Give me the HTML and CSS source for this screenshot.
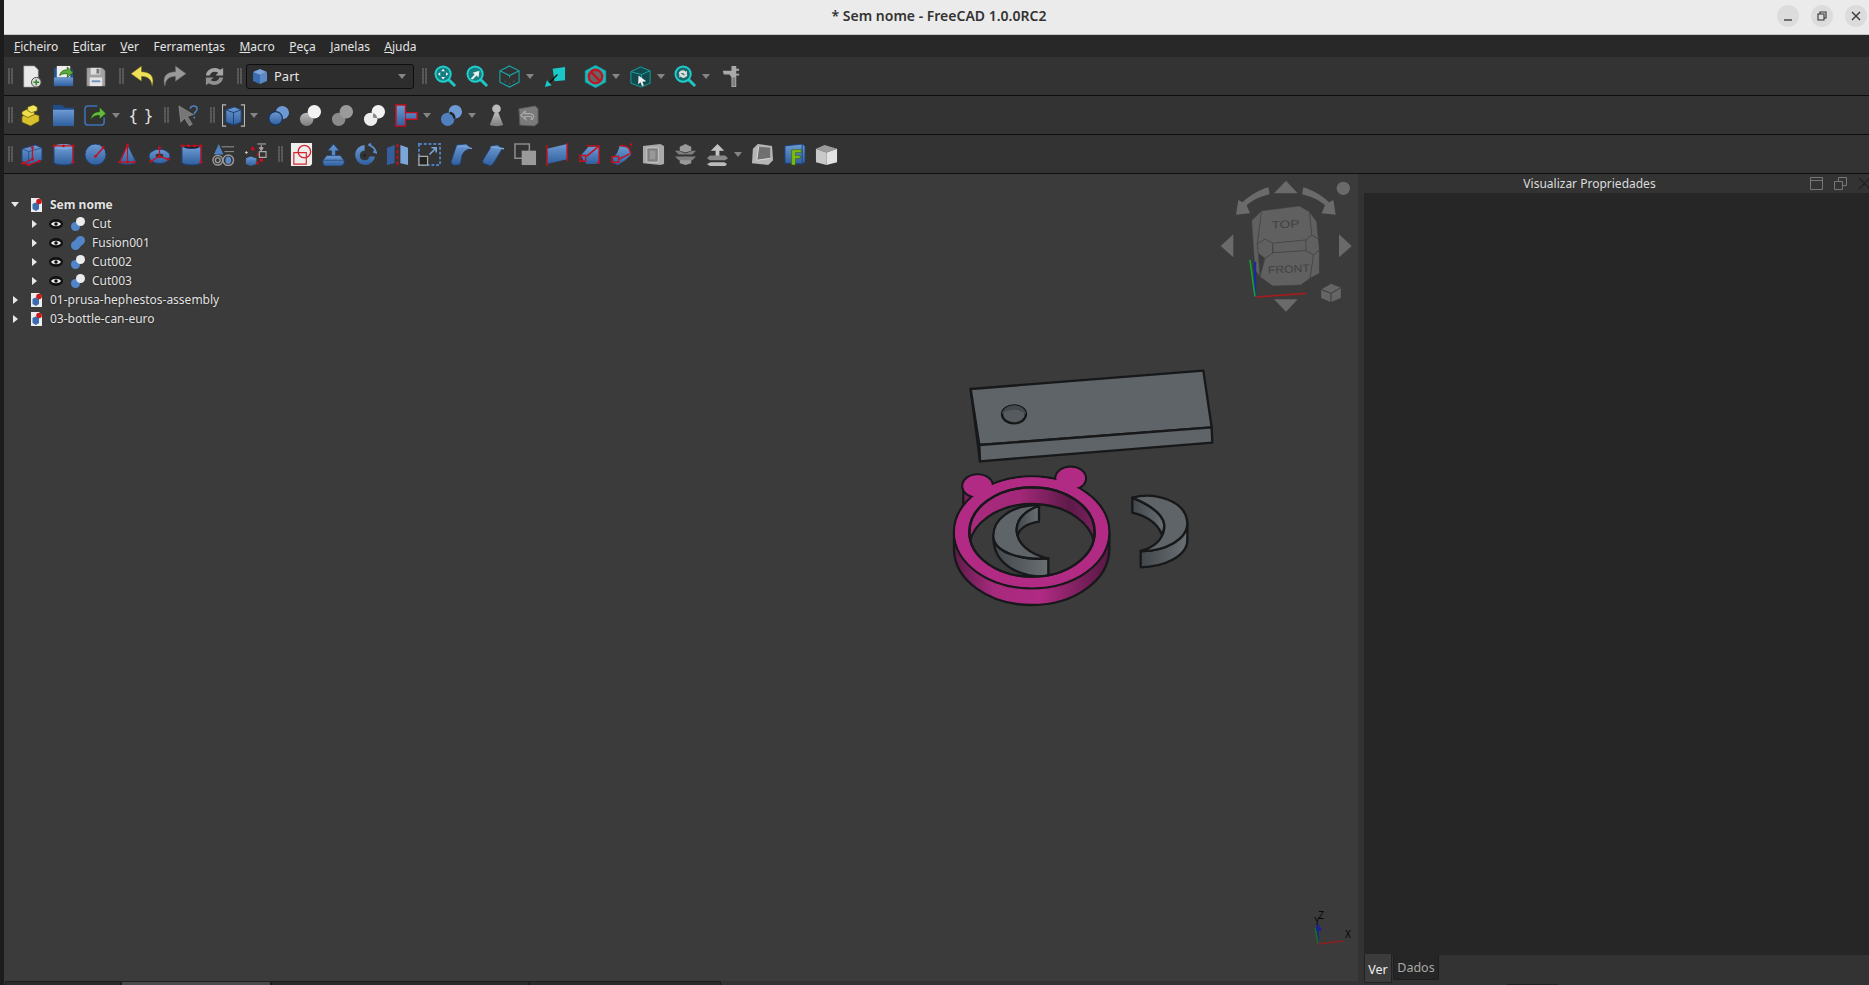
FILE: index.html
```html
<!DOCTYPE html>
<html lang="pt">
<head>
  <meta charset="UTF-8">
  <title>* Sem nome - FreeCAD 1.0.0RC2</title>
  <link rel="stylesheet" href="styles.css">
</head>
<body>
  <svg class="defs" width="0" height="0">
    <defs>
      <linearGradient id="mag" x1="0" x2="1" y1="0" y2="0">
        <stop offset="0" stop-color="#5e1a49"/><stop offset=".25" stop-color="#a52a7c"/><stop offset=".55" stop-color="#b12a84"/><stop offset="1" stop-color="#571843"/>
      </linearGradient>
      <linearGradient id="magin" x1="0" x2="1" y1="0" y2="0">
        <stop offset="0" stop-color="#a82a7e"/><stop offset=".4" stop-color="#a32878"/><stop offset=".8" stop-color="#5e1a49"/><stop offset="1" stop-color="#7a205d"/>
      </linearGradient>
      <linearGradient id="steel" x1="0" x2="1" y1="0" y2="0">
        <stop offset="0" stop-color="#42474b"/><stop offset="1" stop-color="#6a6f73"/>
      </linearGradient>
      <linearGradient id="blue" x1="0" x2="0" y1="0" y2="1">
        <stop offset="0" stop-color="#6d9ad2"/><stop offset="1" stop-color="#2f5f9f"/>
      </linearGradient>
      <linearGradient id="gray" x1="0" x2="0" y1="0" y2="1">
        <stop offset="0" stop-color="#bbb"/><stop offset="1" stop-color="#7d7d7d"/>
      </linearGradient>

      <!-- row 1 -->
      <symbol id="i-new" viewBox="0 0 24 24"><path d="M4 1h11l4 4v18H4z" fill="#e9e9e9" stroke="#999" stroke-width=".6"/><circle cx="17" cy="18" r="5" fill="#ddd" stroke="#444"/><path d="M17 15v6M14 18h6" stroke="#2c8a2c" stroke-width="1.6"/></symbol>
      <symbol id="i-open" viewBox="0 0 24 24"><path d="M2 3h7l2 2h11v17H2z" fill="#25548f"/><path d="M5 1h14v12H5z" fill="#eee"/><path d="M2 13h20v9H2z" fill="url(#blue)"/><path d="M8 11c1-5 5-6 8-6V2l6 6-6 5v-4c-3 0-6 0-8 2z" fill="#5cae3a" stroke="#1c4f14" stroke-width=".7"/></symbol>
      <symbol id="i-save" viewBox="0 0 24 24"><path d="M3 3h16l3 3v16H3z" fill="#a2a2a2" stroke="#777" stroke-width=".6"/><path d="M7 3h10v7H7z" fill="#ddd"/><path d="M13 4h3v5h-3z" fill="#777"/><path d="M6 13h13v9H6z" fill="#e4e4e4"/><path d="M8 16h9v2H8z" fill="#6f93bd"/></symbol>
      <symbol id="i-undo" viewBox="0 0 24 24"><path d="M11 1L0 9l11 8v-5c6 0 10 2 11 10 3-9-1-15-11-15z" fill="#efe05a" stroke="#6c6118" stroke-width=".6"/></symbol>
      <symbol id="i-redo" viewBox="0 0 24 24"><path d="M13 1l11 8-11 8v-5C7 12 3 14 2 22-1 13 3 7 13 7z" fill="#999" stroke="#666" stroke-width=".6"/></symbol>
      <symbol id="i-refresh" viewBox="0 0 24 24"><path d="M3 11C4 4 12 1 18 5l3-2v8h-8l3-3c-4-2-8-1-9 3z" fill="#a5a5a5"/><path d="M21 13c-1 7-9 10-15 6l-3 2v-8h8l-3 3c4 2 8 1 9-3z" fill="#909090"/></symbol>
      <symbol id="i-fitall" viewBox="0 0 24 24"><path d="M15 15l7 7" stroke="#1fc6c4" stroke-width="3"/><circle cx="9.500" cy="9.500" r="8" fill="#157f80" stroke="#1fcfcd" stroke-width="2"/><path d="M9.500 4l2 2.500h-4zM9.500 15l2-2.500h-4zM4 9.500l2.500-2v4zM15 9.500l-2.500-2v4z" fill="#eef"/></symbol>
      <symbol id="i-fitsel" viewBox="0 0 24 24"><path d="M15 15l7 7" stroke="#1fc6c4" stroke-width="3"/><circle cx="9.500" cy="9.500" r="8" fill="#157f80" stroke="#1fcfcd" stroke-width="2"/><path d="M5 14l4-4-2-2 7-2-1 7-2-2-4 4z" fill="#eee"/></symbol>
      <symbol id="i-iso" viewBox="0 0 24 24"><path d="M12 1l10 5v12l-10 5-10-5V6zM2 6l10 5 10-5M12 11v2" fill="none" stroke="#17a8a8" stroke-width="1.100"/><path d="M7 17l1 .5M16 17.500l1-.5M12 19v1" stroke="#17a8a8"/></symbol>
      <symbol id="i-meas" viewBox="0 0 24 24"><path d="M9 4l13-2v14l-11 1z" fill="#1bc8c8"/><path d="M14 10L5 19" stroke="#111" stroke-width="1.400"/><path d="M1 23l2-7 5 5z" fill="#1bc8c8"/></symbol>
      <symbol id="i-nodraw" viewBox="0 0 24 24"><path d="M12 0l11 6v12l-11 6-11-6V6z" fill="#1bb9bb" stroke="#0c6d6d" stroke-width=".7"/><circle cx="12" cy="12" r="7" fill="#666" stroke="#c01522" stroke-width="2.500"/><path d="M7 7l10 10" stroke="#c01522" stroke-width="2.500"/></symbol>
      <symbol id="i-selbox" viewBox="0 0 24 24"><path d="M12 2l10 4v13l-9 4-11-4V7z" fill="#124a4d" stroke="#18a3a5"/><path d="M2 7l11 3 9-4M13 10v4" fill="none" stroke="#18a3a5"/><path d="M10 11l8 6-4 .5 1.500 4-2 .5-1.500-4-2.500 2z" fill="#eee"/></symbol>
      <symbol id="i-zoomsel" viewBox="0 0 24 24"><path d="M15 15l7 7" stroke="#1fc6c4" stroke-width="3"/><circle cx="9.500" cy="9.500" r="8" fill="#16686a" stroke="#1fcfcd" stroke-width="2"/><path d="M5 9c0-3 5-5 7-2l1.500-1v4h-4l1-1c-1-1-3-1-4 1zM14 10c0 3-5 5-7 2l-1.500 1V9h4l-1 1c1 1 3 1 4-1z" fill="#ddd"/></symbol>
      <symbol id="i-caliper" viewBox="0 0 24 24"><path d="M4 6h9V1h5v3h3v2h-3v3h3v2h-3v12h-5V13l-2-3H5z" fill="#a9a9a9"/><path d="M14 13h3v9h-3z" fill="#7c7c7c"/></symbol>

      <!-- row 2 -->
      <symbol id="i-blocks" viewBox="0 0 24 24"><path d="M2 13l8-4 10 3v6l-9 5-9-4z" fill="#d9c12e" stroke="#544a0e" stroke-width=".7"/><path d="M2 8l8-4 5 2v5l-7 3-6-3z" fill="#f0df4b" stroke="#544a0e" stroke-width=".7"/><path d="M8 3l6-2 4 2v4l-6 2-4-2z" fill="#f2e75e" stroke="#544a0e" stroke-width=".7"/></symbol>
      <symbol id="i-folder" viewBox="0 0 24 24"><path d="M1 1h9l4 3h9v19H1z" fill="#1f4d8a"/><path d="M1 6h22v17H1z" fill="url(#blue)"/></symbol>
      <symbol id="i-share" viewBox="0 0 24 24"><path d="M14 2H4a3 3 0 0 0-3 3v14a3 3 0 0 0 3 3h14a3 3 0 0 0 3-3v-5" fill="none" stroke="#3f72b5" stroke-width="1.600"/><path d="M7 17c0-6 4-9 9-9V3l7 7-7 6v-4c-4 0-7 1-9 5z" fill="#62b93d" stroke="#173f10" stroke-width=".7"/></symbol>
      <symbol id="i-whats" viewBox="0 0 24 24"><path d="M3 2l15 9-6 2 5 8-3 2-5-8-4 4z" fill="#777" stroke="#999" stroke-width=".6"/><path d="M15 5c0-4 7-4 7 0 0 3-3 3-3 6M19 13v2" fill="none" stroke="#4f80bd" stroke-width="1.600"/></symbol>
      <symbol id="i-group" viewBox="0 0 24 24"><path d="M4 1H0v22h4M20 1h4v22h-4" transform="translate(.5 0) scale(.96 1)" fill="none" stroke="#bbb" stroke-width="1.300"/><path d="M4 6l9-3 7 3v13l-8 3-8-3z" fill="url(#blue)" stroke="#1d3f73"/><path d="M4 6l8 3 8-3M12 9v13" fill="none" stroke="#1d3f73"/></symbol>
      <symbol id="i-fuse" viewBox="0 0 24 24"><circle cx="16" cy="9" r="7" fill="#6d9ad2"/><circle cx="9" cy="15" r="7" fill="url(#blue)" stroke="#16345f" stroke-width="1.200"/></symbol>
      <symbol id="i-cut" viewBox="0 0 24 24"><circle cx="8" cy="16" r="7" fill="url(#gray)"/><circle cx="16" cy="8" r="7" fill="#f2f2f2"/></symbol>
      <symbol id="i-common" viewBox="0 0 24 24"><circle cx="8" cy="16" r="7" fill="#8b8b8b"/><circle cx="16" cy="8" r="7" fill="#9a9a9a"/></symbol>
      <symbol id="i-inter" viewBox="0 0 24 24"><circle cx="8" cy="16" r="7" fill="#eee"/><circle cx="16" cy="8" r="7" fill="#f2f2f2"/><path d="M11 9.500a7 7 0 0 1 4 5 7 7 0 0 1-4.500-.5 7 7 0 0 1 .5-4.500z" fill="#888"/></symbol>
      <symbol id="i-join" viewBox="0 0 24 24"><path d="M1 1h10v8h12v7H11v7H1z" fill="url(#blue)" stroke="#c4101c" stroke-width="1.500"/><path d="M11 9v7" stroke="#c4101c" stroke-width="1"/></symbol>
      <symbol id="i-split" viewBox="0 0 24 24"><circle cx="16" cy="8" r="7" fill="#6d9ad2"/><circle cx="8" cy="16" r="7" fill="#4f80bd"/><path d="M10 9c4 1 5 4 5 6" fill="none" stroke="#222" stroke-width="2.500"/></symbol>
      <symbol id="i-pawn" viewBox="0 0 24 24"><circle cx="12" cy="5" r="4.500" fill="#bbb"/><path d="M10 9h4l5 13c-4 1.500-10 1.500-14 0z" fill="url(#gray)"/></symbol>
      <symbol id="i-graycube" viewBox="0 0 24 24"><path d="M2 5l17-3 3 3v15l-4 3-15-1z" fill="#7b7b7b" stroke="#5a5a5a"/><path d="M16 16c3-3 1-6-3-6H8l1-3-5 5 5 4-1-3h5c3 0 3 2 2 3z" fill="none" stroke="#aaa" stroke-width="1.200"/></symbol>

      <!-- row 3 -->
      <symbol id="i-box" viewBox="0 0 24 24"><path d="M2 6l14-4 7 3v13l-14 5-7-4z" fill="url(#blue)" stroke="#1d3f73"/><path d="M2 6l7 3 14-4M9 9v13" fill="none" stroke="#1d3f73" stroke-width=".7"/><path d="M13 5v12L3 21l6 2 11-4" fill="none" stroke="#c4101c" stroke-width="1.300"/><g fill="#c4101c"><circle cx="13" cy="5" r="1.500"/><circle cx="13" cy="17" r="1.500"/><circle cx="3" cy="21" r="1.500"/><circle cx="9" cy="23" r="1.500"/><circle cx="20" cy="19" r="1.500"/></g></symbol>
      <symbol id="i-cyl" viewBox="0 0 24 24"><path d="M2 4v16c0 4 20 4 20 0V4z" fill="url(#blue)" stroke="#1d3f73"/><ellipse cx="12" cy="4" rx="10" ry="3" fill="#7aa4da"/><path d="M2 3h20v17" fill="none" stroke="#c4101c" stroke-width="1.300"/><g fill="#c4101c"><circle cx="2" cy="3" r="1.500"/><circle cx="12" cy="3" r="1.500"/><circle cx="22" cy="3" r="1.500"/><circle cx="22" cy="20" r="1.500"/></g></symbol>
      <symbol id="i-sphere" viewBox="0 0 24 24"><circle cx="12" cy="12" r="11" fill="url(#blue)" stroke="#1d3f73"/><path d="M12 14L20 5" stroke="#c4101c" stroke-width="1.500"/><circle cx="12" cy="14" r="1.500" fill="#c4101c"/><circle cx="20" cy="5" r="1.500" fill="#c4101c"/></symbol>
      <symbol id="i-cone" viewBox="0 0 24 24"><path d="M12 2L3 20c3 3 15 3 18 0z" fill="url(#blue)" stroke="#1d3f73" stroke-width=".7"/><path d="M12 2v18H4z M12 20h7" fill="none" stroke="#c4101c" stroke-width="1.200"/><g fill="#c4101c"><circle cx="12" cy="2" r="1.500"/><circle cx="12" cy="20" r="1.500"/><circle cx="4" cy="20" r="1.500"/><circle cx="19" cy="20" r="1.500"/></g></symbol>
      <symbol id="i-torus" viewBox="0 0 24 24"><ellipse cx="12" cy="14" rx="11" ry="7.500" fill="url(#blue)" stroke="#1d3f73"/><ellipse cx="12" cy="13" rx="4" ry="2" fill="#333"/><path d="M12 5v9L3 19M12 14l9 3" fill="none" stroke="#c4101c" stroke-width="1.300"/><g fill="#c4101c"><circle cx="12" cy="5" r="1.500"/><circle cx="12" cy="14" r="1.500"/><circle cx="3" cy="19" r="1.500"/><circle cx="21" cy="17" r="1.500"/></g></symbol>
      <symbol id="i-tube" viewBox="0 0 24 24"><path d="M2 4v16c0 4 20 4 20 0V4z" fill="url(#blue)" stroke="#1d3f73"/><ellipse cx="12" cy="4" rx="8" ry="2" fill="#123"/><path d="M2 3h20v17" fill="none" stroke="#c4101c" stroke-width="1.300"/><g fill="#c4101c"><circle cx="2" cy="3" r="1.500"/><circle cx="9" cy="3" r="1.500"/><circle cx="15" cy="3" r="1.500"/><circle cx="22" cy="3" r="1.500"/><circle cx="22" cy="20" r="1.500"/></g></symbol>
      <symbol id="i-prims" viewBox="0 0 24 24"><path d="M7 1L2 12h10z" fill="#4f80bd"/><path d="M10 4h13M13 9h10" stroke="#999"/><g fill="none" stroke="#999" stroke-width="1.500"><circle cx="6" cy="18" r="5"/><circle cx="6" cy="18" r="2.500"/><circle cx="17" cy="18" r="5.500"/></g><ellipse cx="17" cy="18" rx="3" ry="4" fill="#5b8bc7"/></symbol>
      <symbol id="i-builder" viewBox="0 0 24 24"><path d="M2 16l5-2 6 2v6l-6 2-5-2z" fill="url(#blue)"/><g fill="#c4101c"><circle cx="9" cy="6" r="2"/><circle cx="15" cy="12" r="1.500"/><circle cx="18" cy="18" r="2"/><circle cx="14" cy="21" r="1.500"/></g><path d="M14 1h9M18 2v5M16 5l2 3 2-3z" stroke="#bbb" fill="#c4101c"/><path d="M16 9h7v6h-7z" fill="none" stroke="#aaa" stroke-width="1.200"/><path d="M1 10h3M2.500 8.500v3" stroke="#ccc"/></symbol>
      <symbol id="i-offset2d" viewBox="0 0 24 24"><path d="M1 0h22v22l-2 2H1z" fill="#eee"/><path d="M4 10h13v12H4z" fill="none" stroke="#d8242c" stroke-width="1.200"/><circle cx="15" cy="9" r="6.500" fill="none" stroke="#d8242c" stroke-width="1.400"/></symbol>
      <symbol id="i-extrude" viewBox="0 0 24 24"><path d="M12 1l6 7h-4v6h-4V8H6z" fill="#5b8bc7" stroke="#1d3f73" stroke-width=".7"/><path d="M1 18l4-5h14l4 5v4l-3 2H3l-2-2z" fill="url(#blue)" stroke="#1d3f73" stroke-width=".7"/><path d="M1 18h22" stroke="#1d3f73" stroke-width=".7"/></symbol>
      <symbol id="i-revolve" viewBox="0 0 24 24"><path d="M11 2A10.500 10.500 0 1 0 22 14h-6a5 5 0 1 1-5-6z" fill="url(#blue)"/><path d="M15 2c4 1 7 4 8 8l-3-1M15 2l3-1" fill="none" stroke="#5b8bc7" stroke-width="2"/><circle cx="11" cy="13" r="1.500" fill="#222"/></symbol>
      <symbol id="i-mirror" viewBox="0 0 24 24"><path d="M1 5l8-3v19l-8 2z" fill="#345f9c"/><path d="M23 5l-8-3v19l8 2z" fill="#7ca5d8"/><path d="M12 1v22" stroke="#c4101c" stroke-width="2" stroke-dasharray="4 2"/></symbol>
      <symbol id="i-scale" viewBox="0 0 24 24"><path d="M1 1h22v22H1z" fill="none" stroke="#4f80bd" stroke-width="2" stroke-dasharray="3 2"/><path d="M1 14h9v9H1z" fill="#222" stroke="#aaa" stroke-width="1.300"/><path d="M12 12l6-6M14 5h5v5" fill="none" stroke="#7ca5d8" stroke-width="1.600"/></symbol>
      <symbol id="i-fillet" viewBox="0 0 24 24"><path d="M7 2L1 20l2 3h6l2-2 1-6C13 9 18 6 22 6L17 1z" fill="url(#blue)" stroke="#1d3f73" stroke-width=".7"/><path d="M8 4c6-1 11 0 15 2" fill="none" stroke="#7ca5d8" stroke-width="1.400"/></symbol>
      <symbol id="i-chamfer" viewBox="0 0 24 24"><path d="M10 3L1 18v3l8 3 3-3 9-15-5-4z" fill="url(#blue)" stroke="#1d3f73" stroke-width=".7"/><path d="M9 4l14 2" stroke="#7ca5d8" stroke-width="1.400"/></symbol>
      <symbol id="i-offset" viewBox="0 0 24 24"><path d="M1 1h15v15H1z" fill="none" stroke="#8c8c8c" stroke-width="1.600"/><path d="M8 8h15v15H8z" fill="#9a9a9a"/></symbol>
      <symbol id="i-ruled" viewBox="0 0 24 24"><path d="M1 6l21-5v16L1 22z" fill="url(#blue)"/><path d="M1 2v22M22 0v19" stroke="#c4101c" stroke-width="1.500"/></symbol>
      <symbol id="i-loft" viewBox="0 0 24 24"><path d="M3 13l8-9h11v18H9l-3-3z" fill="url(#blue)"/><path d="M9 3h13v18H19" fill="none" stroke="#c4101c" stroke-width="1.500"/><path d="M22 3L9 14M2 13h6v6H2z" fill="none" stroke="#c4101c" stroke-width="1.500"/></symbol>
      <symbol id="i-sweep" viewBox="0 0 24 24"><path d="M3 15c4-2 6-8 7-12l9 2 3 7-6 6-8 5-4-2z" fill="url(#blue)"/><path d="M10 3c3-1 8 0 10 3M2 14h7v6H2zM9 17l12-6M20 6l2 5" fill="none" stroke="#c4101c" stroke-width="1.500"/><circle cx="22" cy="1.500" r="1.300" fill="#c4101c"/></symbol>
      <symbol id="i-thick" viewBox="0 0 24 24"><path d="M1 3l18-2 4 2v19l-4 1-18-2z" fill="#aaa"/><path d="M5 5h12v15H5z" fill="#808080" stroke="#ccc"/><path d="M8 8h6v9H8z" fill="#999"/></symbol>
      <symbol id="i-section" viewBox="0 0 24 24"><path d="M6 4l6-3 6 3v4l-6 2-6-2zM6 16l6-2 6 2v5l-6 2-6-2z" fill="#9a9a9a"/><path d="M1 8l4 0 7 3 7-3 4 0-4 4H5zM1 14h22l-4 4H5z" fill="#7f7f7f"/></symbol>
      <symbol id="i-xsect" viewBox="0 0 24 24"><path d="M12 1l7 7h-5v6h-4V8H5z" fill="#c4c4c4"/><path d="M4 13h16l3 3-3 2H4l-3-2z" fill="#888"/><path d="M5 20h14l3 2-2 2H4l-3-2z" fill="#bbb"/></symbol>
      <symbol id="i-shell" viewBox="0 0 24 24"><path d="M7 1l15 2 1 15-5 5-17-2 1-15z" fill="#b5b5b5"/><path d="M8 4l12 1v11l-14 2z" fill="#707070"/><path d="M8 4l-2 14 14-2" fill="none" stroke="#ddd"/></symbol>
      <symbol id="i-compound" viewBox="0 0 24 24"><path d="M2 3l18-2 3 2v17l-3 2-18-1z" fill="url(#blue)" stroke="#1d3f73"/><path d="M20 1v21" stroke="#1d3f73"/><path d="M9 7h10v3h-6v3h5v3h-5v7H9z" fill="#7cbb13" stroke="#3a5a08" stroke-width=".6"/></symbol>
      <symbol id="i-solid" viewBox="0 0 24 24"><path d="M1 6l11 4v13L1 20z" fill="#c9c9c9"/><path d="M23 6l-11 4v13l11-3z" fill="#e3e3e3"/><path d="M1 6l9-4 13 4-11 4z" fill="#9c9c9c"/></symbol>

      <!-- tree -->
      <symbol id="t-doc" viewBox="0 0 16 16"><path d="M3 1h8l3 3v11H3z" fill="#eee"/><path d="M4.500 7l3-1.500L11 7v5l-3 2-3.500-2z" fill="#3a6db0"/><circle cx="11" cy="4.500" r="2.800" fill="#c91a1a"/></symbol>
      <symbol id="t-eye" viewBox="0 0 14 10"><ellipse cx="7" cy="5" rx="7" ry="5" fill="#111"/><path d="M2 5c2-3 8-3 10 0-2 3-8 3-10 0z" fill="#eee"/><circle cx="7" cy="5" r="1.800" fill="#111"/></symbol>
      <symbol id="t-cut" viewBox="0 0 16 16"><circle cx="5.500" cy="10.500" r="4.500" fill="#5185c8"/><circle cx="10.500" cy="5.500" r="4.500" fill="#ececec"/></symbol>
      <symbol id="t-fuse" viewBox="0 0 16 16"><circle cx="5.500" cy="10.500" r="4.500" fill="#5185c8"/><circle cx="10.500" cy="5.500" r="4.500" fill="#5185c8"/><path d="M2.500 7.500l5-5 6 6-5 5z" fill="#5185c8"/></symbol>
    </defs>
  </svg>

  <header class="titlebar">
    <div class="title">* Sem nome - FreeCAD 1.0.0RC2</div>
    <div class="winbtns">
      <span class="winbtn"><svg width="12" height="12" viewBox="0 0 12 12"><path d="M2 10h8" stroke="#333" stroke-width="1.300"/></svg></span>
      <span class="winbtn"><svg width="12" height="12" viewBox="0 0 12 12"><path d="M2 4h6v6H2zM4 4V2h6v6H8" fill="none" stroke="#333" stroke-width="1.100"/></svg></span>
      <span class="winbtn"><svg width="12" height="12" viewBox="0 0 12 12"><path d="M2 2l8 8M10 2l-8 8" stroke="#333" stroke-width="1.300"/></svg></span>
    </div>
  </header>

  <nav class="menubar">
    <span><u>F</u>icheiro</span>
    <span><u>E</u>ditar</span>
    <span><u>V</u>er</span>
    <span>Ferramen<u>t</u>as</span>
    <span><u>M</u>acro</span>
    <span><u>P</u>eça</span>
    <span><u>J</u>anelas</span>
    <span><u>A</u>juda</span>
  </nav>

  <div class="toolbar">
    <span class="grip first"></span>
    <span class="tool"><svg class="ic"><use href="#i-new"/></svg></span>
    <span class="tool"><svg class="ic"><use href="#i-open"/></svg></span>
    <span class="tool"><svg class="ic"><use href="#i-save"/></svg></span>
    <span class="grip wide"></span>
    <span class="tool"><svg class="ic"><use href="#i-undo"/></svg></span>
    <span class="tool"><svg class="ic"><use href="#i-redo"/></svg></span>
    <span class="tool gap"><svg class="ic"><use href="#i-refresh"/></svg></span>
    <span class="grip"></span>
    <div class="combo">
      <svg class="combo-ic"><path d="M1 4l7 3v9l-7-3z" fill="#3a6db0"/><path d="M15 4L8 7v9l7-3z" fill="#5b8bc7"/><path d="M1 4l7-3 7 3-7 3z" fill="#7aa4da"/></svg>
      <span class="combo-txt">Part</span>
      <span class="drop combo-drop"></span>
    </div>
    <span class="grip wide"></span>
    <span class="tool"><svg class="ic"><use href="#i-fitall"/></svg></span>
    <span class="tool"><svg class="ic"><use href="#i-fitsel"/></svg></span>
    <span class="tool"><svg class="ic"><use href="#i-iso"/></svg></span><span class="drop"></span>
    <span class="tool gap-s"><svg class="ic"><use href="#i-meas"/></svg></span>
    <span class="tool gap"><svg class="ic"><use href="#i-nodraw"/></svg></span><span class="drop"></span>
    <span class="tool"><svg class="ic"><use href="#i-selbox"/></svg></span><span class="drop"></span>
    <span class="tool"><svg class="ic"><use href="#i-zoomsel"/></svg></span><span class="drop"></span>
    <span class="tool"><svg class="ic"><use href="#i-caliper"/></svg></span>
  </div>

  <div class="toolbar">
    <span class="grip first"></span>
    <span class="tool"><svg class="ic"><use href="#i-blocks"/></svg></span>
    <span class="tool"><svg class="ic"><use href="#i-folder"/></svg></span>
    <span class="tool"><svg class="ic"><use href="#i-share"/></svg></span><span class="drop"></span>
    <span class="tool braces">{ }</span>
    <span class="grip wide"></span>
    <span class="tool"><svg class="ic"><use href="#i-whats"/></svg></span>
    <span class="grip"></span>
    <span class="tool"><svg class="ic"><use href="#i-group"/></svg></span><span class="drop"></span>
    <span class="tool"><svg class="ic"><use href="#i-fuse"/></svg></span>
    <span class="tool"><svg class="ic"><use href="#i-cut"/></svg></span>
    <span class="tool"><svg class="ic"><use href="#i-common"/></svg></span>
    <span class="tool"><svg class="ic"><use href="#i-inter"/></svg></span>
    <span class="tool"><svg class="ic"><use href="#i-join"/></svg></span><span class="drop"></span>
    <span class="tool"><svg class="ic"><use href="#i-split"/></svg></span><span class="drop"></span>
    <span class="tool"><svg class="ic"><use href="#i-pawn"/></svg></span>
    <span class="tool"><svg class="ic"><use href="#i-graycube"/></svg></span>
  </div>

  <div class="toolbar">
    <span class="grip first"></span>
    <span class="tool"><svg class="ic"><use href="#i-box"/></svg></span>
    <span class="tool"><svg class="ic"><use href="#i-cyl"/></svg></span>
    <span class="tool"><svg class="ic"><use href="#i-sphere"/></svg></span>
    <span class="tool"><svg class="ic"><use href="#i-cone"/></svg></span>
    <span class="tool"><svg class="ic"><use href="#i-torus"/></svg></span>
    <span class="tool"><svg class="ic"><use href="#i-tube"/></svg></span>
    <span class="tool"><svg class="ic"><use href="#i-prims"/></svg></span>
    <span class="tool"><svg class="ic"><use href="#i-builder"/></svg></span>
    <span class="grip"></span>
    <span class="tool"><svg class="ic"><use href="#i-offset2d"/></svg></span>
    <span class="tool"><svg class="ic"><use href="#i-extrude"/></svg></span>
    <span class="tool"><svg class="ic"><use href="#i-revolve"/></svg></span>
    <span class="tool"><svg class="ic"><use href="#i-mirror"/></svg></span>
    <span class="tool"><svg class="ic"><use href="#i-scale"/></svg></span>
    <span class="tool"><svg class="ic"><use href="#i-fillet"/></svg></span>
    <span class="tool"><svg class="ic"><use href="#i-chamfer"/></svg></span>
    <span class="tool"><svg class="ic"><use href="#i-offset"/></svg></span>
    <span class="tool"><svg class="ic"><use href="#i-ruled"/></svg></span>
    <span class="tool"><svg class="ic"><use href="#i-loft"/></svg></span>
    <span class="tool"><svg class="ic"><use href="#i-sweep"/></svg></span>
    <span class="tool"><svg class="ic"><use href="#i-thick"/></svg></span>
    <span class="tool"><svg class="ic"><use href="#i-section"/></svg></span>
    <span class="tool"><svg class="ic"><use href="#i-xsect"/></svg></span><span class="drop"></span>
    <span class="tool"><svg class="ic"><use href="#i-shell"/></svg></span>
    <span class="tool"><svg class="ic"><use href="#i-compound"/></svg></span>
    <span class="tool"><svg class="ic"><use href="#i-solid"/></svg></span>
  </div>

  <main class="workspace">
    <section class="center">
      <div class="viewport">
        <svg class="scene" viewBox="4 174 1354 807">
          <!-- parts, coordinates taken from a 3x crop at 930,350 -->
          <g transform="translate(930 350) scale(.33333)" stroke="#17181a" stroke-width="7" stroke-linejoin="round">
            <path d="M122 117L148 285L150 334L122 117z" fill="#2c2e30"/>
            <path d="M122 117L820 62L845 232L148 285z" fill="#5f6468"/>
            <path d="M148 285L845 232L847 278L150 334z" fill="#5f6468"/>
            <ellipse cx="252" cy="193" rx="36" ry="27" fill="#565b5f"/>
            <path d="M252 166a36 27 0 0 0-36 27c8-10 25-14 36-14s26 4 36 14a36 27 0 0 0-36-27z" fill="#44494d" stroke-width="0"/>

            <!-- ring -->
            <path d="M100 405V462L135 470V420z" fill="#7a205d"/>
            <path d="M72 547V597A233 168 0 0 0 538 597V547z" fill="url(#mag)"/>
            <ellipse cx="143" cy="408" rx="46" ry="35" fill="#b12a84"/>
            <ellipse cx="422" cy="385" rx="46" ry="35" fill="#b12a84"/>
            <ellipse cx="305" cy="547" rx="233" ry="168" fill="#b12a84"/>
            <ellipse cx="143" cy="408" rx="43" ry="32" fill="#b12a84" stroke="none"/>
            <ellipse cx="422" cy="385" rx="43" ry="32" fill="#b12a84" stroke="none"/>
            <ellipse cx="305" cy="547" rx="230" ry="165" fill="#b12a84" stroke="none"/>
            <ellipse cx="306" cy="546" rx="188" ry="134" fill="url(#magin)"/>
            <clipPath id="hole"><ellipse cx="306" cy="546" rx="188" ry="134"/></clipPath>
            <g clip-path="url(#hole)">
              <ellipse cx="306" cy="596" rx="188" ry="134" fill="#3b3b3b"/>
              <path d="M190 560C190 640 260 682 355 680V625C270 632 192 605 190 560z" fill="url(#steel)"/>
              <path d="M327 465C240 465 188 510 190 560C192 605 270 632 355 625C300 615 260 580 260 540C260 505 290 480 327 468z" fill="#5f6468"/>
              <path d="M327 468C290 480 260 505 260 540C260 546 261 551 262 556C270 535 295 520 327 515z" fill="url(#steel)"/>
            </g>
            <ellipse cx="306" cy="546" rx="188" ry="134" fill="none"/>

            <!-- second half -->
            <path d="M607 443C660 465 700 490 703 525C703 535 700 545 695 552C680 515 640 495 607 488z" fill="url(#steel)"/>
            <path d="M632 603V652C700 650 772 620 772 570V520C770 570 700 605 632 603z" fill="url(#steel)"/>
            <path d="M607 443C670 425 770 450 772 520C772 570 700 605 632 603C680 590 705 560 703 525C700 490 660 465 607 443z" fill="#5f6468"/>
          </g>

          <!-- navigation cube -->
          <g transform="translate(1200 170) scale(.33333)" stroke="#3f3f3f" stroke-width="1.500">
            <g fill="#6a6a6a" stroke="none">
              <path d="M258 32L222 70H293z"/>
              <path d="M62 228L100 193V262z"/>
              <path d="M455 228L417 193V262z"/>
              <path d="M258 425L222 388H293z"/>
              <circle cx="430" cy="55" r="20"/>
              <path d="M205 52L209 73C180 80 155 92 140 106L150 130L108 134L115 90L128 97C150 75 178 60 205 52z"/>
              <path d="M310 52L306 73C335 80 360 92 375 106L365 130L407 134L400 90L387 97C365 75 337 60 310 52z"/>
            </g>
            <path d="M362 358L393 340L424 352V385L393 398L362 385z" fill="#656565" stroke="#3a3a3a" stroke-width="3"/>
            <path d="M362 358L393 370L424 352M393 370V398" fill="none" stroke="#3a3a3a" stroke-width="3"/>
            <g fill="#606060">
              <path d="M155 152L185 122L172 222L175 250L180 320L165 300z"/>
              <path d="M328 125L350 155L355 207L335 195z"/>
              <path d="M340 255L358 240L358 310L330 325z"/>
              <path d="M185 122L298 108L328 125L335 195L318 210L218 220L195 207L172 222z"/>
              <path d="M172 222L195 207L218 220V250L195 265L175 250z"/>
              <path d="M218 220L318 210V242L220 248z"/>
              <path d="M318 210L335 195L355 207L358 240L340 255L318 242z"/>
              <path d="M195 265L220 248L318 242L340 255L330 325L302 345L218 348L180 320z"/>
            </g>
            <text x="257" y="174" transform="rotate(-3 257 174)" class="cube-txt" stroke="none" textLength="84" lengthAdjust="spacingAndGlyphs">TOP</text>
            <text x="267" y="308" transform="rotate(-3 267 308)" class="cube-txt" stroke="none" textLength="126" lengthAdjust="spacingAndGlyphs">FRONT</text>
            <path d="M165 380V275" stroke="#1d2a9a" stroke-width="7"/>
            <path d="M165 380L150 270" stroke="#17a02c" stroke-width="5"/>
            <path d="M168 381L318 370" stroke="#a51c1c" stroke-width="5"/>
          </g>

          <!-- axis cross -->
          <g stroke-width="1.500" fill="none">
            <path d="M1318 945V925" stroke="#17258c"/>
            <path d="M1318 925l-3 5h6z" fill="#17258c" stroke="#17258c"/>
            <path d="M1318 944L1315 928" stroke="#1b6e22"/>
            <path d="M1318 944L1343 941" stroke="#8d1f1f"/>
          </g>
          <text x="1318" y="919" class="axis-txt">Z</text>
          <text x="1314" y="925" class="axis-txt">Y</text>
          <text x="1345" y="938" class="axis-txt">X</text>
        </svg>

        <ul class="tree">
          <li class="row root"><span class="arrow open"></span><svg class="doc"><use href="#t-doc"/></svg><b>Sem nome</b></li>
          <li class="row child"><span class="arrow"></span><svg class="eye"><use href="#t-eye"/></svg><svg class="obj"><use href="#t-cut"/></svg>Cut</li>
          <li class="row child"><span class="arrow"></span><svg class="eye"><use href="#t-eye"/></svg><svg class="obj"><use href="#t-fuse"/></svg>Fusion001</li>
          <li class="row child"><span class="arrow"></span><svg class="eye"><use href="#t-eye"/></svg><svg class="obj"><use href="#t-cut"/></svg>Cut002</li>
          <li class="row child"><span class="arrow"></span><svg class="eye"><use href="#t-eye"/></svg><svg class="obj"><use href="#t-cut"/></svg>Cut003</li>
          <li class="row root"><span class="arrow"></span><svg class="doc"><use href="#t-doc"/></svg>01-prusa-hephestos-assembly</li>
          <li class="row root"><span class="arrow"></span><svg class="doc"><use href="#t-doc"/></svg>03-bottle-can-euro</li>
        </ul>
      </div>
      <div class="doctabs">
        <span class="doctab w1"></span>
        <span class="doctab w2 active"></span>
        <span class="doctab w3"></span>
        <span class="doctab w4"></span>
      </div>
    </section>

    <aside class="panel">
      <div class="panel-head">
        <span class="panel-title">Visualizar Propriedades</span>
        <svg class="panel-ic" viewBox="0 0 13 13"><path d="M.5.5h12v12H.5zM.5 3.500h12" fill="none" stroke="#777"/></svg>
        <svg class="panel-ic" viewBox="0 0 13 13"><path d="M.5 4.500h8v8h-8zM4.500 4.500v-4h8v8h-4" fill="none" stroke="#777"/></svg>
        <svg class="panel-ic last" viewBox="0 0 13 13"><path d="M1 1l11 11M12 1L1 12" stroke="#222" stroke-width="1.500"/></svg>
      </div>
      <div class="panel-body"></div>
      <div class="panel-tabs">
        <span class="ptab active">Ver</span>
        <span class="ptab">Dados</span>
        <span class="tabline"></span>
      </div>
    </aside>
  </main>
</body>
</html>
```

FILE: styles.css
```css
* {
  box-sizing: border-box;
}
html, body {
  height: 100%;
}
body {
  margin: 0;
  height: 985px;
  overflow: hidden;
  padding-left: 4px;
  display: flex;
  flex-direction: column;
  background: #1c1c1c;
  color: #dcdcdc;
  font-family: "Noto Sans", sans-serif;
  font-size: 12px;
}
.defs {
  position: absolute;
}

.titlebar {
  height: 35px;
  flex: none;
  position: relative;
  display: flex;
  align-items: center;
  justify-content: center;
  background: #ebebeb;
  border-bottom: 1px solid #c4c4c4;
  color: #333;
}
.title {
  font-size: 14px;
  font-weight: 600;
  padding-bottom: 3px;
  margin-left: 5px;
}
.winbtns {
  position: absolute;
  right: 2px;
  top: 5px;
  display: flex;
  gap: 12px;
}
.winbtn {
  width: 22px;
  height: 22px;
  border-radius: 50%;
  background: #dcdcdc;
  display: flex;
  align-items: center;
  justify-content: center;
}

.menubar {
  height: 22px;
  flex: none;
  display: flex;
  align-items: center;
  gap: 14.400px;
  padding-left: 10px;
  background: #282828;
  color: #e4e4e4;
  white-space: nowrap;
}

.toolbar {
  height: 39px;
  flex: none;
  display: flex;
  align-items: center;
  background: #333;
  border-bottom: 1px solid #0e0e0e;
}
.grip {
  width: 14px;
  height: 16px;
  flex: none;
  background: radial-gradient(#5c5c5c 0.8px, transparent 1px) right 2px top 0 / 2px 3px repeat-y,
              radial-gradient(#5c5c5c 0.8px, transparent 1px) right 5px top 0 / 2px 3px repeat-y;
}
.grip.first {
  width: 11px;
}
.grip.wide {
  width: 15px;
}
.tool {
  width: 32px;
  height: 32px;
  flex: none;
  display: flex;
  align-items: center;
  justify-content: center;
}
.tool.gap {
  margin-left: 8px;
}
.tool.gap-s {
  margin-left: 1px;
}
.ic {
  width: 23px;
  height: 23px;
}
.braces {
  font-family: "DejaVu Sans Mono", monospace;
  font-size: 16px;
  color: #e2e2e2;
  letter-spacing: -2px;
}
.drop {
  width: 13px;
  flex: none;
  display: flex;
}
.drop::before {
  content: "";
  border-left: 4px solid transparent;
  border-right: 4px solid transparent;
  border-top: 5px solid #858585;
  margin-left: 1px;
}

.combo {
  width: 168px;
  height: 25px;
  margin-left: 2px;
  flex: none;
  display: flex;
  align-items: center;
  background: #2d2d2d;
  border: 1px solid #0e0e0e;
  border-radius: 3px;
  padding-left: 5px;
  color: #e6e6e6;
}
.combo-ic {
  width: 16px;
  height: 17px;
}
.combo-txt {
  margin-left: 6px;
  flex: 1;
  font-size: 13px;
}
.combo-drop {
  margin-right: 3px;
}

.workspace {
  flex: 1;
  min-height: 0;
  display: flex;
}
.center {
  width: 1354px;
  flex: none;
  display: flex;
  flex-direction: column;
  background: #333;
}
.viewport {
  flex: 1;
  position: relative;
  background: #3b3b3b;
  padding-top: 21px;
}
.scene {
  position: absolute;
  left: 0;
  top: 0;
  width: 1354px;
  height: 807px;
}
.cube-txt {
  font-family: "Liberation Sans", sans-serif;
  font-size: 32px;
  text-anchor: middle;
  fill: #424242;
}
.axis-txt {
  font-family: "DejaVu Sans Mono", monospace;
  font-size: 10px;
  fill: #0a0a0a;
}

.tree {
  list-style: none;
  margin: 0;
  padding: 0;
  position: relative;
  width: 300px;
}
.row {
  height: 19px;
  display: flex;
  align-items: center;
  white-space: nowrap;
  color: #e2e2e2;
  text-shadow: 0 0 2px #1c1c1c;
}
.row.root {
  padding-left: 8px;
}
.row.child {
  padding-left: 28px;
}
.row b {
  font-weight: 700;
}
.arrow {
  width: 0;
  height: 0;
  margin-right: 12px;
  flex: none;
  border-top: 4px solid transparent;
  border-bottom: 4px solid transparent;
  border-left: 5px solid #e8e8e8;
}
.row.root .arrow {
  margin-left: 1px;
  margin-right: 10px;
}
.row.root .arrow.open {
  width: 0;
  margin-left: -1px;
  margin-right: 9px;
  border: 0 solid transparent;
  border-left-width: 4px;
  border-right-width: 4px;
  border-top: 5px solid #e8e8e8;
}
.doc {
  width: 16px;
  height: 16px;
  margin-right: 6px;
  flex: none;
}
.eye {
  width: 14px;
  height: 10px;
  flex: none;
}
.obj {
  width: 16px;
  height: 16px;
  margin: 0 6px 0 7px;
  flex: none;
}

.doctabs {
  height: 4px;
  flex: none;
  display: flex;
  padding-left: 1px;
}
.doctab {
  height: 4px;
  background: #2b2b2b;
  border: 1px solid #1e1e1e;
  border-bottom: 0;
}
.doctab.active {
  background: #4a4a4a;
}
.w1 {
  width: 116px;
}
.w2 {
  width: 150px;
}
.w3 {
  width: 258px;
}
.w4 {
  width: 192px;
}

.panel {
  flex: 1;
  min-width: 0;
  display: flex;
  flex-direction: column;
  background: #333;
  padding-left: 6px;
}
.panel-head {
  height: 19px;
  flex: none;
  display: flex;
  align-items: center;
  color: #dcdcdc;
}
.panel-title {
  flex: 1;
  text-align: center;
  padding: 0 0 1px 16px;
}
.panel-ic {
  width: 13px;
  height: 13px;
  margin-left: 11px;
  flex: none;
}
.panel-ic.last {
  margin-right: -2px;
}
.panel-body {
  flex: 1;
  background: #262626;
}
.panel-tabs {
  height: 30px;
  flex: none;
  display: flex;
  align-items: flex-start;
  font-size: 12.500px;
}
.ptab {
  height: 25px;
  width: 46px;
  margin-left: 1px;
  display: flex;
  align-items: center;
  justify-content: center;
  background: #262626;
  border: 1px solid #1f1f1f;
  border-top: 0;
  border-radius: 0 0 2px 2px;
  color: #a8a8a8;
}
.ptab.active {
  width: 28px;
  height: 29px;
  margin-left: 0;
  margin-top: -1px;
  padding-top: 3px;
  background: #3c3c3c;
  border-color: #222;
  color: #f0f0f0;
}
.tabline {
  width: 51px;
  height: 1px;
  margin: 29px 0 0 68px;
  background: #222;
}
```
